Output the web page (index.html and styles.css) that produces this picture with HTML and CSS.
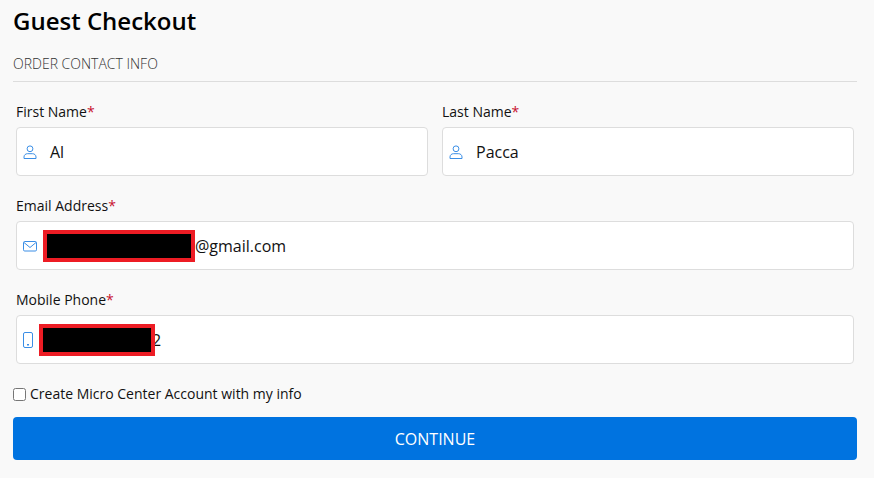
FILE: index.html
```html
<!DOCTYPE html>
<html lang="en">
<head>
    <meta charset="UTF-8">
    <title>Guest Checkout</title>
    <link rel="stylesheet" href="styles.css">
</head>
<body>
    <div class="checkout">
        <h1>Guest Checkout</h1>
        <h2>ORDER CONTACT INFO</h2>

        <div class="row">
            <div class="group">
                <label>First Name<span class="req">*</span></label>
                <div class="field">
                    <svg class="icon" viewBox="0 0 14 14" fill="none" stroke="currentColor" stroke-width="1">
                        <circle cx="7" cy="3.8" r="2.9"/>
                        <path d="M1 13.5h12v-1.5c0-2-1.600-3.300-3.500-3.300h-5c-1.900 0-3.500 1.300-3.500 3.300z"/>
                    </svg>
                    <span class="value">Al</span>
                </div>
            </div>
            <div class="group">
                <label>Last Name<span class="req">*</span></label>
                <div class="field">
                    <svg class="icon" viewBox="0 0 14 14" fill="none" stroke="currentColor" stroke-width="1">
                        <circle cx="7" cy="3.8" r="2.9"/>
                        <path d="M1 13.5h12v-1.5c0-2-1.600-3.300-3.500-3.300h-5c-1.900 0-3.500 1.300-3.500 3.300z"/>
                    </svg>
                    <span class="value">Pacca</span>
                </div>
            </div>
        </div>

        <div class="group">
            <label>Email Address<span class="req">*</span></label>
            <div class="field">
                <svg class="icon" viewBox="0 0 14 14" fill="none" stroke="currentColor" stroke-width="1">
                    <rect x="0.500" y="2.500" width="13" height="9.500" rx="1.200"/>
                    <path d="M1 3.500l6 5 6-5"/>
                </svg>
                <span class="redact redact-email"></span>
                <span class="after">@gmail.com</span>
            </div>
        </div>

        <div class="group">
            <label>Mobile Phone<span class="req">*</span></label>
            <div class="field">
                <svg class="icon icon-phone" viewBox="0 0 10 16" fill="none" stroke="currentColor" stroke-width="1">
                    <rect x="0.500" y="0.500" width="9" height="15" rx="1.500"/>
                    <path d="M4 12.800h2" stroke-width="1.500"/>
                </svg>
                <span class="redact redact-phone"></span>
                <span class="after after-phone">2</span>
            </div>
        </div>

        <div class="account">
            <input type="checkbox" id="createAccount">
            <label for="createAccount">Create Micro Center Account with my info</label>
        </div>

        <button class="continue">CONTINUE</button>
    </div>
</body>
</html>
```

FILE: styles.css
```css
body {
    margin: 0;
    background-color: #f9f9f9;
    font-family: "Open Sans", Arial, sans-serif;
    color: #111;
}
.checkout {
    width: 844px;
    margin-left: 13px;
}
h1 {
    margin: 0;
    padding-top: 5px;
    font-size: 24px;
    line-height: 32px;
    font-weight: 600;
    color: #000;
}
h2 {
    margin: 17px 0 0;
    padding-bottom: 7px;
    border-bottom: 1px solid #ddd;
    font-size: 14px;
    line-height: 20px;
    font-weight: 300;
    color: #333;
}
.row {
    display: flex;
    gap: 14px;
}
.row .group {
    flex: 1;
}
.group {
    margin: 0 3px;
    padding-top: 20px;
}
.row {
    margin-right: 3px;
}
.row .group {
    margin: 0;
}
.row .group:first-child {
    margin-left: 3px;
}
.group + .group {
    padding-top: 20px;
}
.group label {
    display: block;
    height: 25px;
    font-size: 14px;
    line-height: 20px;
}
.req {
    color: #c8102e;
}
.field {
    display: flex;
    align-items: center;
    height: 47px;
    padding-left: 6px;
    background-color: #fff;
    border: 1px solid #ddd;
    border-radius: 4px;
    font-size: 16px;
}
.icon {
    width: 14px;
    height: 14px;
    color: #3a8ee6;
    flex-shrink: 0;
}
.icon-phone {
    width: 10px;
    height: 16px;
}
.value {
    margin-left: 13px;
}
.redact {
    flex-shrink: 0;
    box-sizing: border-box;
    height: 32px;
    background-color: #000;
    border: 4px solid #ed1c24;
    position: relative;
}
.redact-email {
    width: 152px;
    margin-left: 6px;
}
.redact-phone {
    width: 116px;
    margin-left: 6px;
}
.after-phone {
    margin-left: -3px;
}
.account {
    display: flex;
    align-items: center;
    margin-top: 20px;
    font-size: 14px;
    line-height: 20px;
}
.account input {
    width: 13px;
    height: 13px;
    margin: 0 4px 0 0;
}
.continue {
    display: block;
    width: 100%;
    height: 43px;
    margin-top: 13px;
    padding: 0;
    background-color: #0073e0;
    color: #fff;
    border: none;
    border-radius: 4px;
    font-family: inherit;
    font-size: 16px;
    cursor: pointer;
}
```
